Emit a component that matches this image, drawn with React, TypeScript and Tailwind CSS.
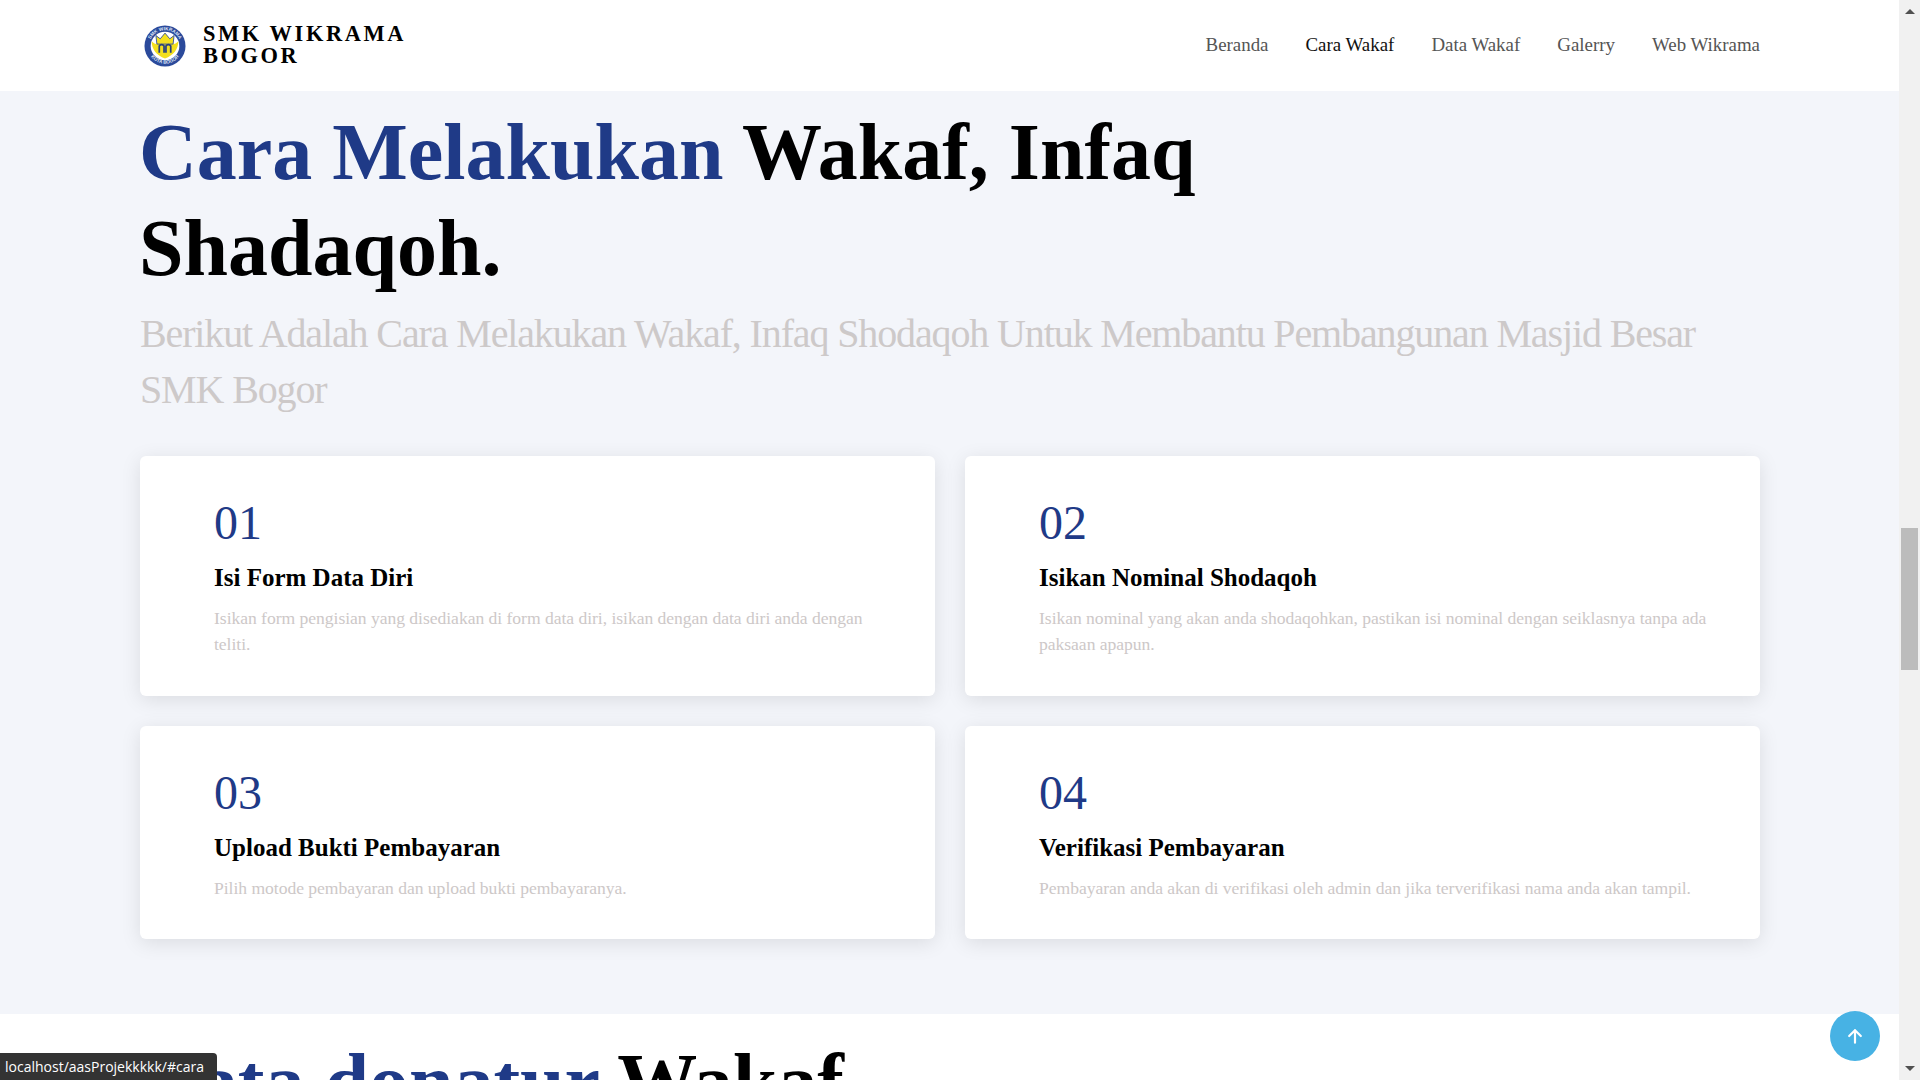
import React from "react";

const navLinks = ["Beranda", "Cara Wakaf", "Data Wakaf", "Galerry", "Web Wikrama"];

const steps = [
  {
    no: "01",
    title: "Isi Form Data Diri",
    text: "Isikan form pengisian yang disediakan di form data diri, isikan dengan data diri anda dengan teliti.",
  },
  {
    no: "02",
    title: "Isikan Nominal Shodaqoh",
    text: "Isikan nominal yang akan anda shodaqohkan, pastikan isi nominal dengan seiklasnya tanpa ada paksaan apapun.",
  },
  {
    no: "03",
    title: "Upload Bukti Pembayaran",
    text: "Pilih motode pembayaran dan upload bukti pembayaranya.",
  },
  {
    no: "04",
    title: "Verifikasi Pembayaran",
    text: "Pembayaran anda akan di verifikasi oleh admin dan jika terverifikasi nama anda akan tampil.",
  },
];

const Logo = () => (
  <svg width="42" height="42" viewBox="0 0 44 44" className="shrink-0">
    <circle cx="22" cy="22" r="21.500" fill="#2b4a9b" />
    <circle cx="22" cy="22" r="15" fill="#ffffff" />
    <defs>
      <path id="ring-top" d="M5.500 22a16.500 16.500 0 0 1 33 0" />
      <path id="ring-bottom" d="M3.500 22a18.500 18.500 0 0 0 37 0" />
    </defs>
    <text fill="#dfe5f5" fontSize="5" fontWeight="700" fontFamily="'Liberation Sans', sans-serif">
      <textPath href="#ring-top" startOffset="50%" textAnchor="middle">SMK WIKRAMA</textPath>
    </text>
    <text fill="#dfe5f5" fontSize="5" fontWeight="700" fontFamily="'Liberation Sans', sans-serif">
      <textPath href="#ring-bottom" startOffset="50%" textAnchor="middle">KOTA BOGOR</textPath>
    </text>
    <path d="M8 17c0 8 5 15 14 18 9-3 14-10 14-18-2 2-4 3-6 3H14c-2 0-4-1-6-3z" fill="#f3e01e" />
    <path d="M13.500 20l-1-9 4.500 3.500 5-6 5 6 4.500-3.500-1 9z" fill="#f3e01e" stroke="#2b4a9b" strokeWidth="0.900" />
    <path d="M16 29v-7a3 3 0 0 1 5 0v7M23 29v-7a3 3 0 0 1 5 0v7" fill="none" stroke="#27407f" strokeWidth="1.800" />
  </svg>
);

const StepCard = ({ no, title, text }: { no: string; title: string; text: string }) => (
  <div className="rounded-[6px] bg-white pt-[38px] pr-[40px] pb-[38px] pl-[74px] shadow-[0_4px_20px_rgba(0,0,0,0.1)]">
    <div className="text-[48px] leading-[58px] text-[#1f3a87]">{no}</div>
    <h3 className="mt-[11px] text-[25px] leading-[29px] font-bold text-black">{title}</h3>
    <p className="mt-[13px] text-[17.6px] leading-[26.4px] tracking-[-0.04px] text-[#cdc8c8]">{text}</p>
  </div>
);

export default function App() {
  return (
    <div className="relative flex h-screen overflow-hidden bg-white font-['Liberation_Serif',serif]">
      <div className="min-w-0 flex-1">
        <header className="flex h-[91px] items-center justify-between bg-white pr-[139px] pl-[144px]">
          <div className="flex items-center gap-[17px]">
            <Logo />
            <div className="-mt-[2px] text-[22.400px] leading-[22px] font-bold tracking-[2.6px] text-black">
              SMK WIKRAMA
              <br />
              BOGOR
            </div>
          </div>
          <nav className="flex gap-[37px] text-[18.900px] text-[#555555]">
            {navLinks.map((link) => (
              <a key={link} className={link === "Cara Wakaf" ? "text-[#111111]" : ""}>
                {link}
              </a>
            ))}
          </nav>
        </header>

        <section className="h-[923px] bg-[#f3f5fa] pt-[13px] pr-[139px] pl-[140px]">
          <h1 className="-ml-[1px] max-w-[1080px] text-[80px] leading-[96px] font-bold text-black">
            <span className="text-[#1f3a87]">Cara Melakukan</span> Wakaf, Infaq Shadaqoh.
          </h1>
          <p className="mt-[10px] text-[40px] leading-[56px] tracking-[-1.13px] text-[#cdc9c9]">
            Berikut Adalah Cara Melakukan Wakaf, Infaq Shodaqoh Untuk Membantu Pembangunan Masjid Besar SMK Bogor
          </p>
          <div className="mt-[38px] grid grid-cols-2 gap-[30px]">
            {steps.map((step) => (
              <StepCard key={step.no} {...step} />
            ))}
          </div>
        </section>

        <section className="bg-white px-[140px] pt-[20px]">
          <h2 className="text-[80px] leading-[96px] font-bold text-black">
            <span className="text-[#1f3a87]">Data donatur</span> Wakaf
          </h2>
        </section>
      </div>

      {/* fake browser scrollbar */}
      <aside className="relative w-[21px] shrink-0 bg-[#f1f1f1]">
        <div className="absolute top-[9px] left-[6px] h-0 w-0 border-x-[5px] border-b-[5px] border-x-transparent border-b-[#505050]" />
        <div className="absolute top-[528px] left-[2px] h-[142px] w-[17px] bg-[#bcbcbc]" />
        <div className="absolute bottom-[9px] left-[6px] h-0 w-0 border-x-[5px] border-t-[5px] border-x-transparent border-t-[#505050]" />
      </aside>

      <button className="absolute right-[40px] bottom-[19px] flex h-[50px] w-[50px] items-center justify-center rounded-full bg-[#47b2e4]">
        <svg width="20" height="20" viewBox="0 0 24 24" fill="none" stroke="#ffffff" strokeWidth="2.600" strokeLinecap="round" strokeLinejoin="round">
          <path d="M12 20V5M5 12l7-7 7 7" />
        </svg>
      </button>

      <div className="absolute bottom-0 left-0 flex h-[27px] w-[217px] items-center rounded-tr-[4px] bg-[#333333] pl-[5px] font-['Open_Sans',sans-serif] text-[14px] whitespace-nowrap text-white">
        localhost/aasProjekkkkk/#cara
      </div>
    </div>
  );
}
